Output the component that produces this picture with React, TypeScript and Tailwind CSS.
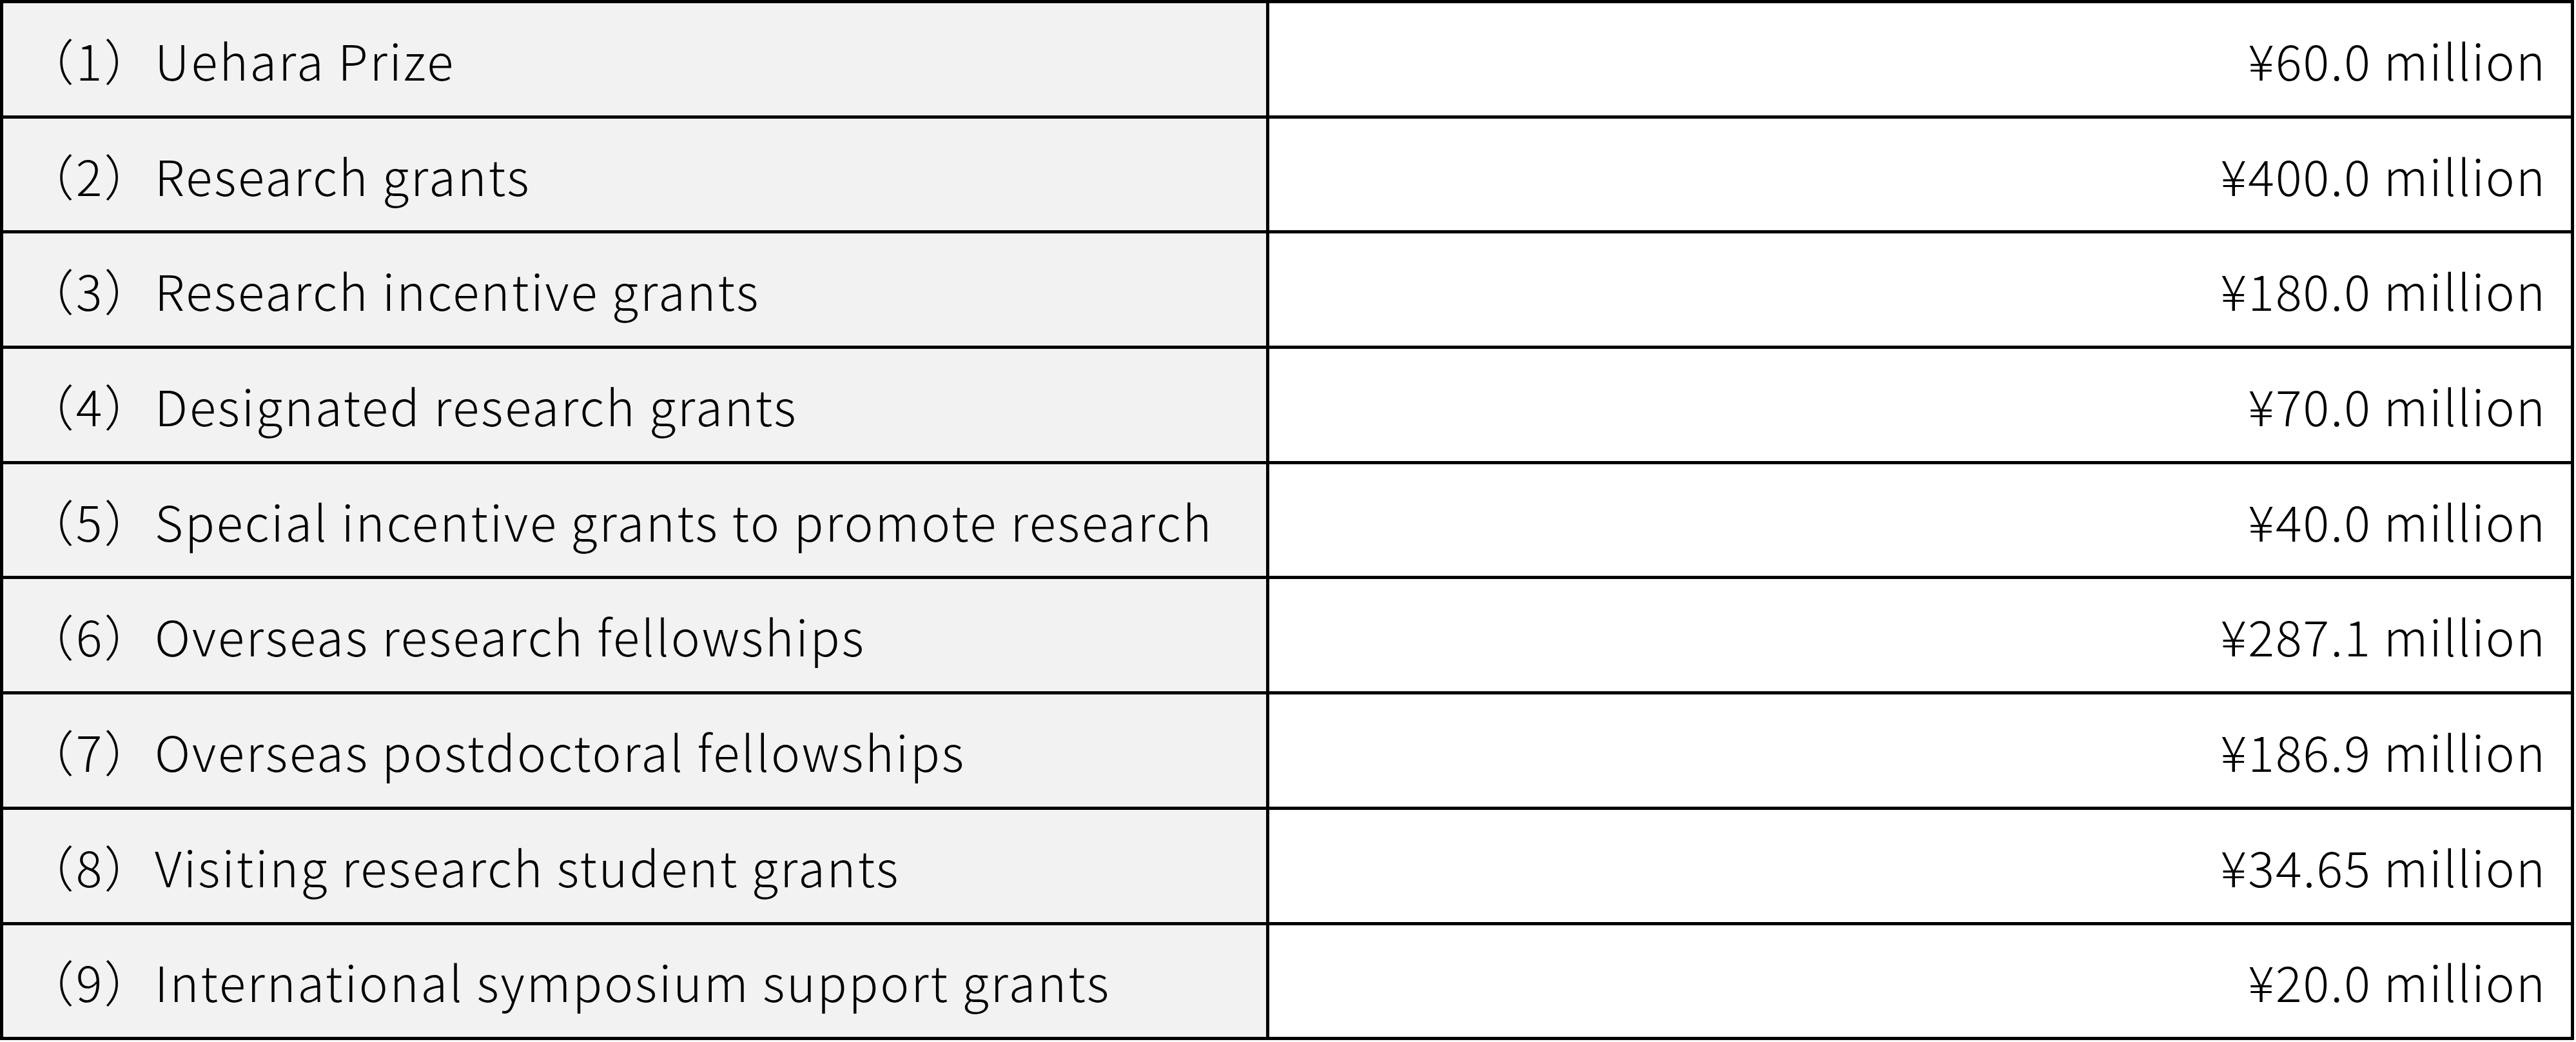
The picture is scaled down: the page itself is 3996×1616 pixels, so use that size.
const rows = [
  { label: "（1）Uehara Prize", amount: "¥60.0 million" },
  { label: "（2）Research grants", amount: "¥400.0 million" },
  { label: "（3）Research incentive grants", amount: "¥180.0 million" },
  { label: "（4）Designated research grants", amount: "¥70.0 million" },
  { label: "（5）Special incentive grants to promote research", amount: "¥40.0 million" },
  { label: "（6）Overseas research fellowships", amount: "¥287.1 million" },
  { label: "（7）Overseas postdoctoral fellowships", amount: "¥186.9 million" },
  { label: "（8）Visiting research student grants", amount: "¥34.65 million" },
  { label: "（9）International symposium support grants", amount: "¥20.0 million" },
];

export default function App() {
  return (
    <div
      className="w-[3996px] h-[1616px] bg-white"
      style={{ fontFamily: '"Noto Sans CJK JP", "Noto Sans", sans-serif' }}
    >
      <div className="w-[3993px] grid grid-cols-[1959px_1fr] gap-[5px] bg-black border-[5px] border-black text-[76px] leading-none font-light text-black">
        {rows.map((r) => (
          <div key={r.label} className="contents">
            <div className="h-[173.7px] bg-[#f2f2f2] flex items-center pl-[34px] tracking-[2.8px] whitespace-nowrap">
              {r.label}
            </div>
            <div className="h-[173.7px] bg-white flex items-center justify-end pr-[38px] tracking-[2px] whitespace-nowrap">
              {r.amount}
            </div>
          </div>
        ))}
      </div>
    </div>
  );
}
